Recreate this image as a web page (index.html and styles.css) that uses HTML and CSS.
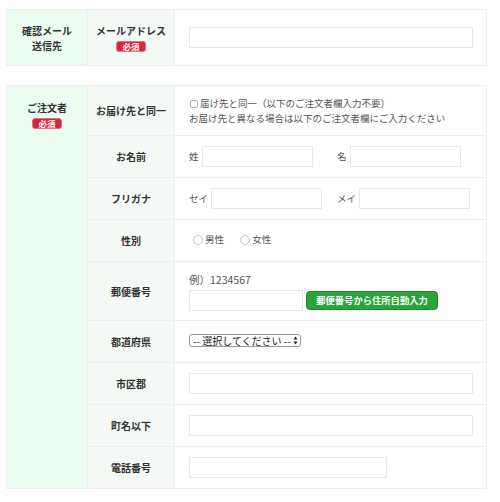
FILE: index.html
```html
<!DOCTYPE html>
<html lang="ja">
<head>
    <meta charset="utf-8">
    <title>ご注文手続き</title>
    <link rel="stylesheet" href="styles.css">
</head>
<body>
    <div class="wrap">
        <table class="form-table">
            <tr class="row-mail">
                <th class="group group-mid">確認メール<br>送信先</th>
                <th class="label">メールアドレス<span class="req">必須</span></th>
                <td><input type="text" class="input-wide"></td>
            </tr>
        </table>

        <table class="form-table">
            <tr class="row-same">
                <th class="group" rowspan="9">ご注文者<span class="req">必須</span></th>
                <th class="label">お届け先と同一</th>
                <td>
                    <label class="check"><input type="checkbox">届け先と同一（以下のご注文者欄入力不要）</label>
                    <div>お届け先と異なる場合は以下のご注文者欄にご入力ください</div>
                </td>
            </tr>
            <tr>
                <th class="label">お名前</th>
                <td>
                    <div class="pair">
                        <span class="field"><span>姓</span><input type="text" class="input-short"></span>
                        <span class="field"><span>名</span><input type="text" class="input-short"></span>
                    </div>
                </td>
            </tr>
            <tr>
                <th class="label">フリガナ</th>
                <td>
                    <div class="pair">
                        <span class="field"><span>セイ</span><input type="text" class="input-short"></span>
                        <span class="field"><span>メイ</span><input type="text" class="input-short"></span>
                    </div>
                </td>
            </tr>
            <tr>
                <th class="label">性別</th>
                <td>
                    <label class="radio"><input type="radio" name="sex">男性</label>
                    <label class="radio"><input type="radio" name="sex">女性</label>
                </td>
            </tr>
            <tr class="row-zip">
                <th class="label">郵便番号</th>
                <td>
                    <div class="hint">例）1234567</div>
                    <div class="zip-line">
                        <input type="text" class="input-zip">
                        <button type="button" class="btn-zip">郵便番号から住所自動入力</button>
                    </div>
                </td>
            </tr>
            <tr>
                <th class="label">都道府県</th>
                <td>
                    <span class="select-wrap">
                        <select class="pref"><option>-- 選択してください --</option></select>
                        <svg class="select-arrow" width="5" height="9" viewBox="0 0 5 9"><path d="M2.5 0.5L4.5 3.5H0.5Z M2.5 8.5L4.5 5.5H0.5Z" fill="#222"/></svg>
                    </span>
                </td>
            </tr>
            <tr>
                <th class="label">市区郡</th>
                <td><input type="text" class="input-wide"></td>
            </tr>
            <tr>
                <th class="label">町名以下</th>
                <td><input type="text" class="input-wide"></td>
            </tr>
            <tr>
                <th class="label">電話番号</th>
                <td><input type="text" class="input-tel"></td>
            </tr>
        </table>
    </div>
</body>
</html>
```

FILE: styles.css
```css
body {
    margin: 0;
    font-family: "Noto Sans CJK JP", "Noto Sans", sans-serif;
    font-size: 10px;
    color: #333;
    background: #fff;
}
.wrap {
    width: 481px;
    padding: 9px 0 0 6px;
}

.form-table {
    width: 481px;
    border-collapse: collapse;
    table-layout: fixed;
    margin-bottom: 19px;
}
.form-table th,
.form-table td {
    border: 1px solid #eeeeee;
    height: 41px;
    padding: 0 14px;
    line-height: 15px;
    vertical-align: middle;
}
.form-table td { font-size: 9.5px; color: #555; }
.form-table th { font-weight: bold; text-align: center; color: #333; }
.form-table .group {
    width: 52px;
    background: #ebfdf0;
    vertical-align: top;
    padding-top: 14px;
}
.form-table .group-mid { vertical-align: middle; padding-top: 0; }
.form-table .label {
    width: 86px;
    background: #f5f9f6;
    padding: 0;
}
.row-mail th, .row-mail td { height: 55px; }
.row-same th, .row-same td { height: 49px; }
.row-zip th, .row-zip td { height: 58px; }

.req {
    display: block;
    width: fit-content;
    margin: 3px auto 0;
    padding: 0 5px;
    background: #d8253a;
    border: 1px solid #e9707c;
    border-radius: 3px;
    color: #fff;
    font-size: 8.5px;
    line-height: 9px;
    font-weight: bold;
}

input[type="text"] {
    box-sizing: border-box;
    height: 21px;
    border: 1px solid #e8e8e8;
    background: #fff;
    margin: 0;
    padding: 0 4px;
}
.input-wide { width: 284px; height: 22px; }
.input-short { width: 111px; }
.input-zip { width: 114px; }
.input-tel { width: 198px; }

.check { display: flex; align-items: center; }
.check input {
    appearance: none;
    width: 8px;
    height: 8px;
    margin: 2px 2px 0 1px;
    border: 1px solid #b5b5b5;
    border-radius: 2px;
    background: #fff;
}

.pair { display: flex; }
.field {
    display: flex;
    flex-shrink: 0;
    align-items: center;
    gap: 3px;
    width: 148px;
}

.radio {
    display: inline-flex;
    align-items: center;
    margin: 0 14px 0 4px;
}
.radio input {
    appearance: none;
    width: 10px;
    height: 10px;
    margin: 1px 2px 0 0;
    border: 1px solid #c2c2c2;
    border-radius: 50%;
    background: #fff;
}
.radio + .radio { margin-left: 0; }

.hint { font-size: 10.5px; line-height: 15px; margin-bottom: 3px; }
.zip-line { display: flex; align-items: center; gap: 3px; }
.btn-zip {
    height: 19px;
    width: 132px;
    padding: 0;
    border: 1px solid #1e8c2e;
    border-radius: 4px;
    background: #27a43a;
    color: #fff;
    font-family: inherit;
    font-size: 9.3px;
    font-weight: bold;
    line-height: 17px;
}

.select-wrap { position: relative; display: inline-block; }
.pref {
    appearance: none;
    width: 112px;
    height: 13px;
    margin: 0;
    padding: 0 0 0 3px;
    border: 1px solid #9a9a9a;
    border-radius: 3px;
    background: #fff;
    color: #222;
    font-family: inherit;
    font-size: 10px;
    line-height: 11px;
}
.select-arrow {
    position: absolute;
    right: 3px;
    top: 2px;
}
```
